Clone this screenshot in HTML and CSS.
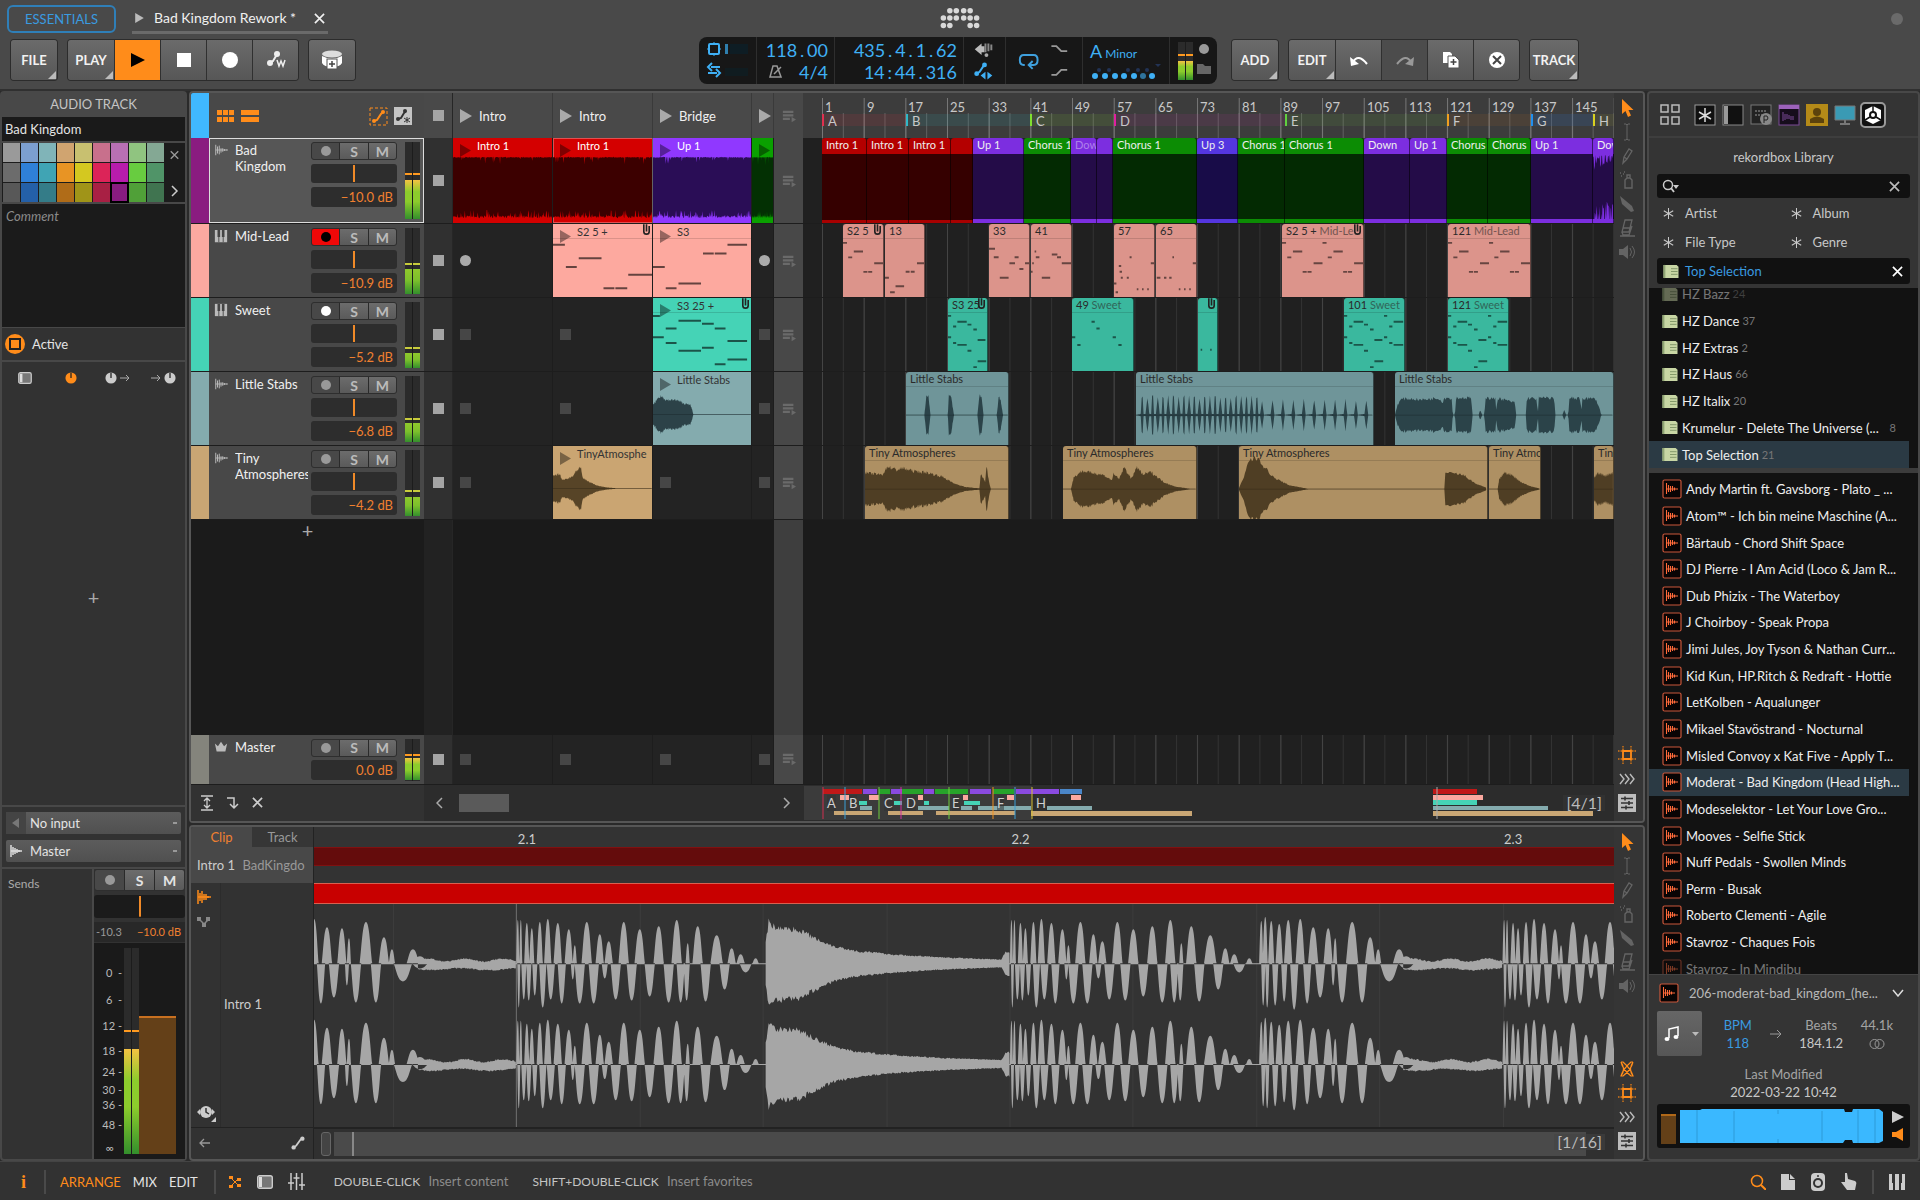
FILE: index.html
```html
<!DOCTYPE html>
<html lang="en">
<head>
<meta charset="utf-8">
<title>Bad Kingdom Rework</title>
<link rel="stylesheet" href="styles.css">
</head>
<body>
<svg class="defs" aria-hidden="true">
  <defs>
    <symbol id="i-audio" viewBox="0 0 16 16"><path d="M2 2v12M4 4v8M6 3v10M8 6v5M10 6v4M12 7v2M14 7.500v1" stroke="currentColor" stroke-width="1.100"/><path d="M2 8h14" stroke="currentColor"/></symbol>
    <symbol id="i-keys" viewBox="0 0 16 16"><path d="M1 1h14v14H1z" fill="currentColor"/><path d="M5.500 15V9M10.500 15V9" stroke="#444" /><path d="M4 1h3v8H4zM9 1h3v8H9z" fill="#444"/></symbol>
    <symbol id="i-crown" viewBox="0 0 16 16"><path d="M1 4l3.500 3L8 2l3.500 5L15 4l-2 9H3z" fill="currentColor"/></symbol>
    <symbol id="i-play" viewBox="0 0 12 14"><path d="M0 0l12 7-12 7z" fill="currentColor"/></symbol>
    <symbol id="i-x" viewBox="0 0 12 12"><path d="M1 1l10 10M11 1L1 11" stroke="currentColor" stroke-width="1.800"/></symbol>
    <symbol id="i-auto" viewBox="0 0 16 16"><path d="M3 13l3-2 5-7 2-1" stroke="currentColor" stroke-width="2" fill="none"/><circle cx="3" cy="13" r="2.500" fill="currentColor"/><circle cx="13" cy="3" r="2.500" fill="currentColor"/></symbol>
    <symbol id="i-scene" viewBox="0 0 16 16"><path d="M1 2h12v2.500H1zM1 6h12v2.500H1zM1 10h8v2.500H1zM11 9l5 3-5 3z" fill="currentColor"/></symbol>
    <symbol id="i-clip" viewBox="0 0 10 14"><path d="M2 0v8a3 3 0 0 0 6 0V2M5 0v8" stroke="#222" stroke-width="1.800" fill="none"/></symbol>
    <symbol id="i-arrow" viewBox="0 0 18 18"><path d="M4 0v15l3.500-3 2.500 6 3-1.500-2.500-5.500h5z" fill="#ff8c1a"/></symbol>
    <symbol id="i-ibeam" viewBox="0 0 18 18"><path d="M6 1h2l1 1 1-1h2M9 2v14M6 17h2l1-1 1 1h2" stroke="currentColor" fill="none"/></symbol>
    <symbol id="i-pen" viewBox="0 0 18 18"><path d="M5 16l1-6 5-8 3 2-5 8zM6 10l3 2" stroke="currentColor" stroke-width="1.300" fill="none"/></symbol>
    <symbol id="i-spray" viewBox="0 0 18 18"><path d="M7 17V9l2-2h3l2 2v8zM9 7V4h3v3M2 2h1M5 3h1M3 5h1M6 1h1" stroke="currentColor" stroke-width="1.400" fill="none"/></symbol>
    <symbol id="i-knife" viewBox="0 0 18 18"><path d="M2 1l12 10 2 5-3 1-9-8z" fill="currentColor"/></symbol>
    <symbol id="i-eraser" viewBox="0 0 18 18"><path d="M7 1h7l-3 12H4zM4 13l1 3h6l3-9M2 17h15M5 9h7" stroke="currentColor" stroke-width="1.300" fill="none"/></symbol>
    <symbol id="i-speaker" viewBox="0 0 18 18"><path d="M1 6h4l5-4v14l-5-4H1z" fill="currentColor"/><path d="M12 5q3 4 0 8M14 3q5 6 0 12" stroke="currentColor" fill="none"/></symbol>
    <symbol id="i-snap" viewBox="0 0 18 18"><path d="M5 5h8v8H5z" fill="none" stroke="#ff8c1a" stroke-width="1.800"/><path d="M5 0v4M13 0v4M5 14v4M13 14v4M0 5h4M0 13h4M14 5h4M14 13h4" stroke="#d87818" stroke-dasharray="1.500 1" stroke-width="1.400"/></symbol>
    <symbol id="i-chev" viewBox="0 0 18 18"><path d="M2 4l4 5-4 5M7 4l4 5-4 5M12 4l4 5-4 5" fill="none" stroke="#bbb" stroke-width="1.400"/></symbol>
    <symbol id="i-mix" viewBox="0 0 18 18"><path d="M0 0h18v18H0z" fill="#bdbdbd"/><path d="M3 4.500h12M3 9h12M3 13.500h12M7 2.500v4M11 7v4M8 11.500v4" stroke="#333" stroke-width="1.600"/></symbol>
    <symbol id="i-cross" viewBox="0 0 18 18"><path d="M3 2h2q8 7 10 14h-2Q5 10 3 2M15 2h-2Q5 9 3 16h2Q13 10 15 2M3 2q5 7 0 14M15 2q-5 7 0 14" fill="none" stroke="#ff8c1a" stroke-width="1.200"/></symbol>
    <symbol id="i-list" viewBox="0 0 18 16"><path d="M1 1h14l2 2v12H1z" fill="#c8d6a4"/><path d="M1 1h2v14H1z" fill="#8fa573"/><path d="M9 5h7M9 8h7M9 11h7" stroke="#7f9466"/></symbol>
    <symbol id="i-file" viewBox="0 0 20 20"><rect x="1" y="1" width="18" height="18" rx="1.500" fill="#080404" stroke="#c9563a" stroke-width="1.200"/><path d="M4.500 4v11M6.500 6v7M8.500 7v6M10.500 7v5M12.500 8.500v3" stroke="#ff6a3a" stroke-width="1.100"/><path d="M4 10h12" stroke="#ff6a3a"/></symbol>
    <symbol id="i-knob" viewBox="0 0 14 14"><circle cx="7" cy="7" r="6.500" fill="currentColor"/><path d="M7 1v6" stroke="#222" stroke-width="1.500"/></symbol>
    <symbol id="i-panel" viewBox="0 0 16 14"><rect x=".7" y=".7" width="14.600" height="12.600" rx="2" fill="#777" stroke="#ccc" stroke-width="1.400"/><path d="M2 2h3v10H2z" fill="#ddd"/></symbol>
    <symbol id="i-star" viewBox="0 0 14 14"><path d="M7 0v14M1 3.500l12 7M13 3.500l-12 7" stroke="currentColor" stroke-width="1.300"/></symbol>
    <g id="n-a"><path d="M0 4h10M13 19h10M27 13h23M51 34h10M63 34h10M78 25h22"/></g>
    <g id="n-t"><path d="M0 3h8M0 25h8M13 14h8M13 31h8M24 9h24M24 33h24M50 12h10M50 39h10M65 17h9M65 56h9M76 28h20M76 50h22"/></g>
  </defs>
</svg>

<div class="app">
  <header class="top">
    <div class="titlebar">
      <button class="essentials">ESSENTIALS</button>
      <div class="project"><svg class="s9"><use href="#i-play"/></svg><span>Bad Kingdom Rework *</span><button class="bare" aria-label="Close project"><svg class="s11"><use href="#i-x"/></svg></button></div>
      <svg class="logo" viewBox="0 0 42 26"><g fill="#d8d8d8"><circle cx="10" cy="4" r="3"/><circle cx="17" cy="4" r="3"/><circle cx="25" cy="4" r="3"/><circle cx="32" cy="4" r="3"/><circle cx="3" cy="12" r="3"/><circle cx="10" cy="12" r="3"/><circle cx="17" cy="12" r="3"/><circle cx="25" cy="12" r="3"/><circle cx="32" cy="12" r="3"/><circle cx="39" cy="12" r="3"/><circle cx="3" cy="20" r="3"/><circle cx="10" cy="20" r="3"/><circle cx="32" cy="20" r="3"/><circle cx="39" cy="20" r="3"/></g></svg>
      <i class="status-dot"></i>
    </div>
    <div class="toolbar">
      <div class="tools-left">
        <div class="group"><button class="tb menu">FILE</button></div>
        <div class="group">
          <button class="tb menu">PLAY</button>
          <button class="tb on" aria-label="Play"><svg width="16" height="16"><path d="M1 1l14 7-14 7z"/></svg></button>
          <button class="tb" aria-label="Stop"><svg width="14" height="14"><path d="M0 0h14v14H0z" fill="#fff"/></svg></button>
          <button class="tb" aria-label="Record"><svg width="16" height="16"><circle cx="8" cy="8" r="8" fill="#fff"/></svg></button>
          <button class="tb" aria-label="Automation write"><svg width="20" height="18"><path d="M3 12l4-2 3-5 1-2" stroke="#eee" stroke-width="2" fill="none"/><circle cx="4" cy="12" r="3" fill="#eee"/><circle cx="11" cy="3" r="3" fill="#eee"/><path d="M11 9l2 6 2-5 2 5 2-6" stroke="#eee" stroke-width="1.500" fill="none"/></svg></button>
        </div>
        <div class="group"><button class="tb" aria-label="Add device"><svg width="22" height="20"><ellipse cx="11" cy="4" rx="10" ry="3.500" fill="#ddd"/><path d="M1 6q10 5 20 0v7q-2 4-10 4T1 13z" fill="#fff"/><rect x="6" y="9" width="10" height="10" fill="#fff" stroke="#555"/><path d="M11 11v6M8 14h6" stroke="#444" stroke-width="1.500"/></svg></button></div>
      </div>
      <div class="display">
        <div class="d-cell d-cpu">
          <svg viewBox="0 0 48 40"><rect x="3" y="4" width="10" height="10" rx="1" fill="none" stroke="#3fb0f5" stroke-width="2"/><path d="M1 9h14M8 2v14" stroke="#3fb0f5" stroke-dasharray="2 10"/><path d="M19 4h3v10h-3z" fill="#2f7fae"/><path d="M24 4h18v10H24z" fill="#0e1d24"/><path d="M14 27H5M2 33h9M6 23l-4 4 4 4M10 29l4 4-4 4" stroke="#3fb0f5" stroke-width="2" fill="none"/><path d="M19 28h23v8H19z" fill="#101c20"/></svg>
        </div>
        <div class="d-cell d-num"><span>118<i>.</i>00</span><span><svg width="13" height="13" class="metro"><path d="M4 1h4l4 11H1zM5 9l7-7" stroke="#999" stroke-width="1.500" fill="none"/></svg><b>4/4</b></span></div>
        <div class="d-cell d-num"><span>435<i>.</i>4<i>.</i>1<i>.</i>62</span><span>14<i>:</i>44<i>.</i>316</span></div>
        <div class="d-cell"><svg viewBox="0 0 42 40"><path d="M11 9l7-6v3h3v6h-3v3z" fill="#bbb"/><path d="M22 3v9M25 3v8M28 4v6" stroke="#888" stroke-width="2"/><circle cx="23" cy="15" r="2" fill="#aaa"/><path d="M13 34l3-2 4-6" stroke="#3fb0f5" stroke-width="2" fill="none"/><circle cx="13" cy="34" r="2.500" fill="#3fb0f5"/><circle cx="21" cy="25" r="2.500" fill="#3fb0f5"/><path d="M17 36l5-4v8zM29 36l-5-4v8z" fill="#3fb0f5"/></svg></div>
        <div class="d-cell"><svg viewBox="0 0 77 40"><path d="M19 25h-1q-4 0-4-5t4-5h10q4 0 4 5t-4 5h-4M27 21l-4 4 4 4" stroke="#3fa0dd" stroke-width="2" fill="none"/><path d="M46 6h5l5 5h6M46 35h5l5-5h6" stroke="#999" stroke-width="1.800" fill="none"/></svg></div>
        <div class="d-cell d-key"><span><b>A</b> Minor</span><svg viewBox="0 0 72 18"><g fill="#3fb0f5"><circle cx="5" cy="12" r="3"/><circle cx="15" cy="12" r="3"/><circle cx="25" cy="12" r="3"/><circle cx="34" cy="12" r="3"/><circle cx="44" cy="12" r="3"/><circle cx="53" cy="12" r="3" opacity=".6"/><circle cx="62" cy="12" r="3"/></g><g fill="#235"><circle cx="9" cy="6" r="2"/><circle cx="19" cy="6" r="2"/><circle cx="38" cy="6" r="2"/><circle cx="48" cy="6" r="2"/><circle cx="57" cy="6" r="2"/><path d="M65 0h6l-3 3z"/></g></svg></div>
        <div class="d-cell d-out"><span class="meter" style="--lvl:50%;--hold:64%"><i></i><i></i></span><svg width="18" height="36"><circle cx="9" cy="7" r="5" fill="#999"/><path d="M2 22h6l2 2h6v8H2z" fill="#666"/></svg></div>
      </div>
      <div class="tools-right">
        <div class="group"><button class="tb menu">ADD</button></div>
        <div class="group">
          <button class="tb menu">EDIT</button>
          <button class="tb" aria-label="Undo"><svg width="20" height="14"><path d="M4 9q5-9 14 2" stroke="#fff" stroke-width="2" fill="none"/><path d="M1 4l1 9 8-2z" fill="#fff"/></svg></button>
          <button class="tb off" aria-label="Redo"><svg width="20" height="14"><path d="M16 9Q11 0 2 11" stroke="#999" stroke-width="2" fill="none"/><path d="M19 4l-1 9-8-2z" fill="#999"/></svg></button>
          <button class="tb" aria-label="Duplicate"><svg width="18" height="18"><path d="M1 1h7l2 2v9H1z" fill="#fff"/><path d="M6 5h7l4 4v8H6z" fill="#fff" stroke="#555"/><path d="M11.500 8v6M8.500 11h6" stroke="#444" stroke-width="1.500"/></svg></button>
          <button class="tb" aria-label="Delete"><svg width="18" height="18"><circle cx="9" cy="9" r="8" fill="#fff"/><path d="M5 5l8 8M13 5l-8 8" stroke="#444" stroke-width="2"/></svg></button>
        </div>
        <div class="group"><button class="tb menu wide">TRACK</button></div>
      </div>
    </div>
  </header>

  <main class="main">
    <aside class="inspector">
      <h2>AUDIO TRACK</h2>
      <input class="name" aria-label="Track name" value="Bad Kingdom">
      <div class="palette">
        <div class="swatches">
          <i class="p1"></i><i class="p2"></i><i class="p3"></i><i class="p4"></i><i class="p5"></i><i class="p6"></i><i class="p7"></i><i class="p8"></i><i class="p9"></i>
          <i class="q1"></i><i class="q2"></i><i class="q3"></i><i class="q4"></i><i class="q5"></i><i class="q6"></i><i class="q7"></i><i class="q8"></i><i class="q9"></i>
          <i class="r1"></i><i class="r2"></i><i class="r3"></i><i class="r4"></i><i class="r5"></i><i class="r6"></i><i class="r7 picked"></i><i class="r8"></i><i class="r9"></i>
        </div>
        <div class="pal-side"><svg class="s9"><use href="#i-x"/></svg><svg width="8" height="12"><path d="M1 1l5 5-5 5" stroke="#ccc" stroke-width="1.500" fill="none"/></svg></div>
      </div>
      <textarea class="comment" aria-label="Comment" placeholder="Comment"></textarea>
      <div class="active"><svg width="20" height="20"><circle cx="10" cy="10" r="10" fill="#ff8c1a"/><rect x="5" y="5" width="10" height="10" fill="#ff8c1a" stroke="#222" stroke-width="2"/></svg>Active</div>
      <div class="remotes">
        <svg width="14" height="12"><use href="#i-panel"/></svg>
        <svg width="12" height="12" class="orange"><use href="#i-knob"/></svg>
        <span><svg width="12" height="12"><use href="#i-knob"/></svg><svg width="10" height="8"><path d="M0 4h9M6 1l3 3-3 3" stroke="#aaa" fill="none"/></svg></span>
        <span><svg width="10" height="8"><path d="M0 4h9M6 1l3 3-3 3" stroke="#aaa" fill="none"/></svg><svg width="12" height="12"><use href="#i-knob"/></svg></span>
      </div>
      <div class="add-device"><button class="bare plus" aria-label="Add device">+</button></div>
      <div class="routing">
        <div class="route"><span class="ric"><svg width="8" height="10"><path d="M0 5l7-5v10z" fill="#777"/></svg></span><select aria-label="Input"><option>No input</option></select></div>
        <div class="route"><span class="ric lit"><svg width="12" height="12"><path d="M1 0v12M3 2v8M5 3v6M7 4v4M9 5v2M1 6h11" stroke="#ddd" stroke-width="1.500"/></svg></span><select aria-label="Output"><option>Master</option></select></div>
      </div>
      <div class="strip">
        <div class="sends">Sends</div>
        <div class="channel">
          <div class="rsm"><button class="rec" aria-label="Arm"><i></i></button><button>S</button><button>M</button></div>
          <div class="pan"></div>
          <div class="levels"><span>-10.3</span><b>−10.0 dB</b></div>
          <div class="fader">
            <div class="scale"><span style="--t:12%">0&nbsp; -</span><span style="--t:25%">6&nbsp; -</span><span style="--t:38%">12&nbsp;-</span><span style="--t:50%">18&nbsp;-</span><span style="--t:60%">24&nbsp;-</span><span style="--t:69%">30&nbsp;-</span><span style="--t:76%">36&nbsp;-</span><span style="--t:86%">48&nbsp;-</span><span style="--t:97%">∞&nbsp; &nbsp;</span></div>
            <span class="meter big" style="--lvl:51%;--hold:60%"><i></i><i></i></span>
            <div class="throw"><i></i></div>
          </div>
        </div>
      </div>
    </aside>

    <div class="center">
      <section class="panel arranger">
        <div class="rows">
          <div class="row head">
            <i class="chip blue"></i>
            <div class="th th-head">
              <svg width="18" height="12"><path d="M0 0h5v5H0zM6 0h5v5H6zM12 0h5v5h-5zM0 7h5v5H0zM6 7h5v5H6zM12 7h5v5h-5z" fill="#ff8c1a"/></svg>
              <svg width="18" height="12"><path d="M0 0h18v5H0zM0 7h18v5H0z" fill="#ff8c1a"/></svg>
              <b class="grow"></b>
              <svg width="19" height="19"><rect x="1" y="1" width="17" height="17" fill="none" stroke="#ff8c1a" stroke-dasharray="3 2"/><path d="M5 14l3-1 4-6 2-2" stroke="#ff8c1a" stroke-width="2" fill="none"/><circle cx="5" cy="14" r="2" fill="#ff8c1a"/><circle cx="14" cy="5" r="2" fill="#ff8c1a"/></svg>
              <svg width="18" height="18"><path d="M0 0h18v18H0z" fill="#c4c4c4"/><path d="M4 12l3-1 3-5 2-2" stroke="#333" stroke-width="2" fill="none"/><circle cx="4" cy="12" r="2" fill="#333"/><circle cx="11" cy="4" r="2" fill="#333"/><path d="M13 10v6M10 11l6 4M16 11l-6 4" stroke="#333"/></svg>
            </div>
            <div class="stop"><i></i></div>
            <div class="slots">
              <div class="scene"><svg class="tri"><use href="#i-play"/></svg>Intro</div><div class="scene"><svg class="tri"><use href="#i-play"/></svg>Intro</div><div class="scene"><svg class="tri"><use href="#i-play"/></svg>Bridge</div><div class="scene"><svg class="tri"><use href="#i-play"/></svg></div>
            </div>
            <div class="sc"><svg class="s14"><use href="#i-scene"/></svg></div>
            <div class="time ruler"><div class="lane">
              <i class="band ba" style="--s:0;--e:84"></i><i class="band bb" style="--s:84;--e:208"></i><i class="band bc" style="--s:208;--e:292"></i><i class="band bd" style="--s:292;--e:463"></i><i class="band be" style="--s:463;--e:625"></i><i class="band bf" style="--s:625;--e:709"></i><i class="band bg" style="--s:709;--e:771"></i><i class="band bh" style="--s:771;--e:792"></i>
              <span class="bar" style="--s:0">1</span><span class="bar" style="--s:42">9</span><span class="bar" style="--s:83">17</span><span class="bar" style="--s:125">25</span><span class="bar" style="--s:167">33</span><span class="bar" style="--s:208">41</span><span class="bar" style="--s:250">49</span><span class="bar" style="--s:292">57</span><span class="bar" style="--s:333">65</span><span class="bar" style="--s:375">73</span><span class="bar" style="--s:417">81</span><span class="bar" style="--s:458">89</span><span class="bar" style="--s:500">97</span><span class="bar" style="--s:542">105</span><span class="bar" style="--s:584">113</span><span class="bar" style="--s:625">121</span><span class="bar" style="--s:667">129</span><span class="bar" style="--s:709">137</span><span class="bar" style="--s:750">145</span>
              <span class="cue" style="--s:0">A</span><span class="cue" style="--s:84">B</span><span class="cue" style="--s:208">C</span><span class="cue" style="--s:292">D</span><span class="cue" style="--s:463">E</span><span class="cue" style="--s:625">F</span><span class="cue" style="--s:709">G</span><span class="cue" style="--s:771">H</span>
            </div></div>
          </div>

          <div class="row tall">
            <i class="chip purple"></i>
            <div class="th selected"><svg class="s14"><use href="#i-audio"/></svg><span class="tname">Bad<br>Kingdom</span>
              <div class="ctl"><div class="rsm"><button class="rec" aria-label="Arm"><i></i></button><button>S</button><button>M</button></div><div class="pan"></div><div class="db">−10.0 dB</div></div>
              <span class="meter" style="--lvl:51%;--hold:59%"><i></i><i></i></span></div>
            <div class="stop"><i></i></div>
            <div class="slots">
              <div class="slot c-red dense"><em>Intro 1</em><svg class="tri"><use href="#i-play"/></svg><svg class="body" data-wave="dense"></svg></div>
              <div class="slot c-red dense lit"><em>Intro 1</em><svg class="tri"><use href="#i-play"/></svg><svg class="body" data-wave="dense"></svg></div>
              <div class="slot c-vio dense"><em>Up 1</em><svg class="tri"><use href="#i-play"/></svg><svg class="body" data-wave="dense"></svg></div>
              <div class="slot c-grn dense"><em></em><svg class="tri"><use href="#i-play"/></svg><svg class="body" data-wave="dense"></svg></div>
            </div>
            <div class="sc"><svg class="s14"><use href="#i-scene"/></svg></div>
            <div class="time"><div class="lane">
              <div class="clip k-red" style="--s:0;--e:45">Intro 1</div><div class="clip k-red" style="--s:45;--e:87">Intro 1</div><div class="clip k-red" style="--s:87;--e:129">Intro 1</div><div class="clip k-red" style="--s:129;--e:151"></div><div class="clip k-vio" style="--s:151;--e:202">Up 1</div><div class="clip k-grn" style="--s:202;--e:249">Chorus 1</div><div class="clip k-vio faint" style="--s:249;--e:275">Dow</div><div class="clip k-vio" style="--s:275;--e:291"></div><div class="clip k-grn" style="--s:291;--e:375">Chorus 1</div><div class="clip k-ind" style="--s:375;--e:416">Up 3</div><div class="clip k-grn" style="--s:416;--e:463">Chorus 1</div><div class="clip k-grn" style="--s:463;--e:542">Chorus 1</div><div class="clip k-vio" style="--s:542;--e:588">Down</div><div class="clip k-vio" style="--s:588;--e:625">Up 1</div><div class="clip k-grn" style="--s:625;--e:666">Chorus</div><div class="clip k-grn" style="--s:666;--e:709">Chorus</div><div class="clip k-vio" style="--s:709;--e:771">Up 1</div><div class="clip k-vio" style="--s:771;--e:792">Dow<svg class="edge" data-wave="edge"></svg></div>
            </div></div>
          </div>

          <div class="row">
            <i class="chip pink"></i>
            <div class="th"><svg class="s14"><use href="#i-keys"/></svg><span class="tname">Mid-Lead</span>
              <div class="ctl"><div class="rsm"><button class="rec armed" aria-label="Arm"><i></i></button><button>S</button><button>M</button></div><div class="pan"></div><div class="db">−10.9 dB</div></div>
              <span class="meter low" style="--lvl:38%;--hold:45%"><i></i><i></i></span></div>
            <div class="stop"><i></i></div>
            <div class="slots">
              <div class="slot empty"><i class="round"></i></div>
              <div class="slot c-pink"><em>S2 5 +</em><svg class="tri"><use href="#i-play"/></svg><svg class="pin"><use href="#i-clip"/></svg><svg class="notes" viewBox="0 0 100 60" preserveAspectRatio="none"><path d="M0 6h12M13 29h11M26 20h23M51 51h11M63 51h12M76 37h24"/></svg></div>
              <div class="slot c-pink"><em>S3</em><svg class="tri"><use href="#i-play"/></svg><svg class="notes" viewBox="0 0 100 60" preserveAspectRatio="none"><path d="M0 29h12M13 51h11M26 46h23M51 15h11M63 15h12M76 6h20"/></svg></div>
              <div class="slot empty"><i class="round"></i></div>
            </div>
            <div class="sc"><svg class="s14"><use href="#i-scene"/></svg></div>
            <div class="time"><div class="lane">
              <div class="clip k-pink" style="--s:21;--e:62">S2 5<svg class="pin"><use href="#i-clip"/></svg><svg class="notes" viewBox="0 0 100 60" preserveAspectRatio="none"><use href="#n-a"/></svg></div>
              <div class="clip k-pink" style="--s:63;--e:103">13<svg class="notes" viewBox="0 0 100 60" preserveAspectRatio="none"><path d="M0 40h10M13 55h12M27 49h22M53 34h10M66 34h10M82 25h18"/></svg></div>
              <div class="clip k-pink" style="--s:167;--e:208">33<svg class="notes" viewBox="0 0 100 60" preserveAspectRatio="none"><path d="M0 10h15M12 19h12M27 40h22M51 25h14M64 19h10M76 31h10M90 25h10"/></svg></div>
              <div class="clip k-pink" style="--s:209;--e:250">41<svg class="notes" viewBox="0 0 100 60" preserveAspectRatio="none"><path d="M0 34h4M3 25h4M9 13h4M12 19h9M27 40h21M52 16h14M65 19h10M77 25h23"/></svg></div>
              <div class="clip k-pink" style="--s:292;--e:333">57<svg class="notes" viewBox="0 0 100 60" preserveAspectRatio="none"><path d="M0 46h6M4 55h6M12 28h6M14 34h6M17 40h5M32 40h5M39 19h5M57 52h4M70 52h4M83 52h4M92 25h8"/></svg></div>
              <div class="clip k-pink" style="--s:334;--e:375">65<svg class="notes" viewBox="0 0 100 60" preserveAspectRatio="none"><path d="M2 40h9M20 40h6M33 40h6M41 19h4M57 52h4M70 52h4M83 52h4M92 25h8"/></svg></div>
              <div class="clip k-pink" style="--s:460;--e:542">S2 5 + <u>Mid-Le</u><svg class="pin"><use href="#i-clip"/></svg><svg class="notes" viewBox="0 0 200 60" preserveAspectRatio="none"><use href="#n-a"/><use href="#n-a" x="100"/></svg></div>
              <div class="clip k-pink" style="--s:626;--e:709">121 <u>Mid-Lead</u><svg class="notes" viewBox="0 0 200 60" preserveAspectRatio="none"><use href="#n-a"/><use href="#n-a" x="100"/></svg></div>
            </div></div>
          </div>

          <div class="row">
            <i class="chip teal"></i>
            <div class="th"><svg class="s14"><use href="#i-keys"/></svg><span class="tname">Sweet</span>
              <div class="ctl"><div class="rsm"><button class="rec white" aria-label="Arm"><i></i></button><button>S</button><button>M</button></div><div class="pan"></div><div class="db">−5.2 dB</div></div>
              <span class="meter low" style="--lvl:23%;--hold:30%"><i></i><i></i></span></div>
            <div class="stop"><i></i></div>
            <div class="slots">
              <div class="slot empty"><i></i></div><div class="slot empty"><i></i></div>
              <div class="slot c-teal"><em>S3 25 +</em><svg class="tri"><use href="#i-play"/></svg><svg class="pin"><use href="#i-clip"/></svg><svg class="notes" viewBox="0 0 100 60" preserveAspectRatio="none"><path d="M0 3h7M0 25h11M13 16h11M13 31h11M26 8h23M26 39h23M50 11h12M50 36h12M63 16h11M63 53h11M76 29h20M76 48h20"/></svg></div>
              <div class="slot empty"><i></i></div>
            </div>
            <div class="sc"><svg class="s14"><use href="#i-scene"/></svg></div>
            <div class="time"><div class="lane">
              <div class="clip k-teal" style="--s:126;--e:166">S3 25<svg class="pin"><use href="#i-clip"/></svg><svg class="notes" viewBox="0 0 100 60" preserveAspectRatio="none"><use href="#n-t"/></svg></div>
              <div class="clip k-teal" style="--s:250;--e:312">49 <u>Sweet</u><svg class="notes" viewBox="0 0 150 60" preserveAspectRatio="none"><path d="M0 25h8M13 33h8M48 9h8M60 16h8M100 25h8M114 33h8"/></svg></div>
              <div class="clip k-teal" style="--s:376;--e:396"><svg class="pin"><use href="#i-clip"/></svg><svg class="notes" viewBox="0 0 50 60" preserveAspectRatio="none"><path d="M7 38h4M32 38h4"/></svg></div>
              <div class="clip k-teal" style="--s:522;--e:583">101 <u>Sweet</u><svg class="notes" viewBox="0 0 150 60" preserveAspectRatio="none"><use href="#n-t"/><use href="#n-t" x="100"/></svg></div>
              <div class="clip k-teal" style="--s:626;--e:687">121 <u>Sweet</u><svg class="notes" viewBox="0 0 150 60" preserveAspectRatio="none"><use href="#n-t"/><use href="#n-t" x="100"/></svg></div>
            </div></div>
          </div>

          <div class="row">
            <i class="chip steel"></i>
            <div class="th"><svg class="s14"><use href="#i-audio"/></svg><span class="tname">Little Stabs</span>
              <div class="ctl"><div class="rsm"><button class="rec" aria-label="Arm"><i></i></button><button>S</button><button>M</button></div><div class="pan"></div><div class="db">−6.8 dB</div></div>
              <span class="meter low" style="--lvl:29%;--hold:35%"><i></i><i></i></span></div>
            <div class="stop"><i></i></div>
            <div class="slots">
              <div class="slot empty"><i></i></div><div class="slot empty"><i></i></div>
              <div class="slot c-steel"><em>Little Stabs</em><svg class="tri"><use href="#i-play"/></svg><svg class="body" data-wave="env" data-env="0,20 4,30 8,38 14,30 24,30 32,22 38,20 40,10 41,0"></svg></div>
              <div class="slot empty"><i></i></div>
            </div>
            <div class="sc"><svg class="s14"><use href="#i-scene"/></svg></div>
            <div class="time"><div class="lane">
              <div class="clip k-steel" style="--s:84;--e:187">Little Stabs<svg class="notes" data-wave="env" data-env="18,0 20,40 22,40 24,0 41,0 42,40 44,40 47,0 70,0 72,40 74,40 76,0 89,0 91,40 93,30 95,0"></svg></div>
              <div class="clip k-steel" style="--s:314;--e:552">Little Stabs<svg class="notes" data-wave="pulses"></svg></div>
              <div class="clip k-steel" style="--s:573;--e:792">Little Stabs<svg class="notes" data-wave="env" data-env="0,0 1,20 3,34 8,34 12,32 20,36 22,26 22.500,36 26,36 26.500,0 27.500,0 28,36 35,36 35.500,0 38.500,0 39,12 40,0 41,0 41.500,36 46,34 46.500,6 47,36 55,26 55.500,0 60,0 60.500,36 65,34 65.500,0 66,36 73,36 73.500,0 77,0 77.500,12 78.500,0 79.500,0 80,36 85,34 85.500,6 86,36 92,34 94,12 94.500,0"></svg></div>
            </div></div>
          </div>

          <div class="row">
            <i class="chip tan"></i>
            <div class="th"><svg class="s14"><use href="#i-audio"/></svg><span class="tname">Tiny Atmospheres</span>
              <div class="ctl"><div class="rsm"><button class="rec" aria-label="Arm"><i></i></button><button>S</button><button>M</button></div><div class="pan"></div><div class="db">−4.2 dB</div></div>
              <span class="meter low" style="--lvl:29%;--hold:38%"><i></i><i></i></span></div>
            <div class="stop"><i></i></div>
            <div class="slots">
              <div class="slot empty"><i></i></div>
              <div class="slot c-tan"><em>TinyAtmosphe</em><svg class="tri"><use href="#i-play"/></svg><svg class="body" data-wave="env" data-env="0,26 7,30 9,18 18,22 28,46 30,22 36,14 44,6 54,2 65,0"></svg></div>
              <div class="slot empty"><i></i></div><div class="slot empty"><i></i></div>
            </div>
            <div class="sc"><svg class="s14"><use href="#i-scene"/></svg></div>
            <div class="time"><div class="lane">
              <div class="clip k-tan" style="--s:43;--e:187">Tiny Atmospheres<svg class="notes" data-wave="env" data-env="0,34 12,30 16,48 22,40 26,44 34,38 44,34 54,26 62,12 70,4 80,1 81,34 84,14 85,50 87,10 88,0"></svg></div>
              <div class="clip k-tan" style="--s:241;--e:375">Tiny Atmospheres<svg class="notes" data-wave="env" data-env="6,0 8,24 14,38 30,30 37,18 38,34 42,20 46,46 51,22 56,46 60,30 66,36 76,14 84,5 96,0"></svg></div>
              <div class="clip k-tan" style="--s:417;--e:666">Tiny Atmospheres<svg class="notes" data-wave="env" data-env="0,2 2,24 4,62 8,66 10,48 14,24 20,8 27,1 28,0 83,0 83.200,34 88,32 91,28 95,12 100,2"></svg></div>
              <div class="clip k-tan" style="--s:667;--e:719">Tiny Atmospheres<svg class="notes" data-wave="env" data-env="17,0 20,20 30,34 44,30 60,16 80,6 98,1"></svg></div>
              <div class="clip k-tan" style="--s:772;--e:792">Tiny<svg class="notes" data-wave="env" data-env="0,24 20,34 60,28 100,34"></svg></div>
            </div></div>
          </div>

          <div class="row filler">
            <div class="addrow"><button class="bare plus" aria-label="Add track">+</button></div>
            <div class="stop"></div><div class="slots"></div><div class="sc"></div><div class="time"></div>
          </div>

          <div class="row master">
            <i class="chip gray"></i>
            <div class="th"><svg class="s14"><use href="#i-crown"/></svg><span class="tname">Master</span>
              <div class="ctl"><div class="rsm"><button class="rec" aria-label="Arm"><i></i></button><button>S</button><button>M</button></div><div class="db">0.0 dB</div></div>
              <span class="meter" style="--lvl:53%;--hold:62%"><i></i><i></i></span></div>
            <div class="stop"><i></i></div>
            <div class="slots"><div class="slot empty"><i></i></div><div class="slot empty"><i></i></div><div class="slot empty"><i></i></div><div class="slot empty"><i></i></div></div>
            <div class="sc"><svg class="s14"><use href="#i-scene"/></svg></div>
            <div class="time"><div class="lane"></div></div>
          </div>

          <div class="row foot">
            <div class="foot-l"><svg width="14" height="16"><path d="M1 1h12M1 15h12M7 3v10M4 6l3-3 3 3M4 10l3 3 3-3" stroke="#ccc" stroke-width="1.300" fill="none"/></svg><svg width="14" height="14"><path d="M1 2h7v9M4 8l4 4 4-4" stroke="#ccc" stroke-width="1.500" fill="none"/></svg><svg class="s11"><use href="#i-x"/></svg></div>
            <div class="foot-s"><svg width="8" height="12"><path d="M6 1L1 6l5 5" stroke="#aaa" stroke-width="1.500" fill="none"/></svg><i></i><b class="grow"></b><svg width="8" height="12"><path d="M1 1l5 5-5 5" stroke="#aaa" stroke-width="1.500" fill="none"/></svg></div>
            <div class="mini">
              <svg viewBox="0 0 811 36" preserveAspectRatio="none">
                <path fill="#3b3b3b" d="M1 1h228v34H1z"/>
                <path fill="#c01818" d="M20 4h39v5H20zM630 4h44v5h-44z"/><path fill="#8a4ae0" d="M60 4h14v5H60zM88 4h11v5H88zM121 4h10v5h-10zM167 4h21v5h-21zM213 4h43v5h-43z"/><path fill="#27a32a" d="M76 4h11v5H76zM99 4h21v5H99zM132 4h33v5h-33zM190 4h21v5h-21z"/><path fill="#4a86c8" d="M257 4h22v5h-22z"/>
                <path fill="#fba9a0" d="M37 10h9v5h-9zM66 10h10v5H66zM115 10h5v5h-5zM160 10h5v5h-5zM204 10h7v5h-7zM268 10h10v5h-10zM630 10h50v5h-50z"/>
                <path fill="#45d3b6" d="M56 16h8v4h-8zM91 16h8v4h-8zM121 16h5v4h-5zM161 16h16v4h-16zM630 15h44v5h-44z"/>
                <path fill="#84abae" d="M57 21h12v4H57zM115 21h31v4h-31zM158 21h11v4h-11zM175 21h53v4h-53zM244 21h45v4h-45zM630 21h115v4H630z"/>
                <path fill="#c9a674" d="M31 26h38v4H31zM85 26h35v4H85zM133 26h79v4h-79zM228 26h161v5H228zM630 26h160v5H630z"/>
                <path stroke="#d03050" d="M20 2v32"/><path stroke="#3aa0d8" d="M42 2v32M212 2v32"/><path stroke="#6fce3c" d="M76 2v32M146 2v32"/><path stroke="#d030a0" d="M98 2v32"/><path stroke="#f09020" d="M190 2v32"/><path stroke="#d8c030" d="M229 2v32"/><path stroke="#aaa" d="M634 2v32"/>
              </svg>
              <span style="--m:24">A</span><span style="--m:46">B</span><span style="--m:81">C</span><span style="--m:103">D</span><span style="--m:149">E</span><span style="--m:194">F</span><span style="--m:233">H</span>
              <output>[4/1]</output>
            </div>
          </div>
        </div>
        <div class="toolcol">
          <svg><use href="#i-arrow"/></svg><svg><use href="#i-ibeam"/></svg><svg><use href="#i-pen"/></svg><svg><use href="#i-spray"/></svg><svg><use href="#i-knife"/></svg><svg><use href="#i-eraser"/></svg><svg><use href="#i-speaker"/></svg><b class="grow"></b><svg><use href="#i-snap"/></svg><svg><use href="#i-chev"/></svg><svg><use href="#i-mix"/></svg>
        </div>
      </section>

      <section class="panel editor">
        <div class="ed-side">
          <div class="tabs"><button class="sel">Clip</button><button>Track</button></div>
          <div class="clipname">Intro 1 <span>BadKingdo</span></div>
          <div class="ed-body">
            <div class="ed-icons"><svg width="14" height="14" class="orange"><path d="M1 0v14M3 3v8M5 1v12M7 4v6M9 4v6M11 6v2M1 7h13" stroke="currentColor" stroke-width="1.500"/></svg><svg width="14" height="12"><path d="M0 1h4v4H0zM9 1h4v4H9zM5 7h4v4H5z" fill="#888"/><path d="M3 4l4 4 4-4" stroke="#888" stroke-width="1.500" fill="none"/></svg><b class="grow"></b><svg width="20" height="18"><circle cx="9" cy="8" r="6" fill="#ccc"/><path d="M9 4v4l3 2" stroke="#333" stroke-width="1.500" fill="none"/><path d="M0 8l3-3v6zM18 8l-3-3v6zM19 18h-5l5-5z" fill="#ccc"/></svg></div>
            <div class="ed-label">Intro 1</div>
          </div>
          <div class="ed-foot"><svg width="12" height="10"><path d="M11 5H1M5 1L1 5l4 4" stroke="#999" stroke-width="1.300" fill="none"/></svg><svg class="s14"><use href="#i-auto"/></svg></div>
        </div>
        <div class="ed-main">
          <div class="ed-ruler"><span style="--x:202">2.1</span><span style="--x:696">2.2</span><span style="--x:1189">2.3</span></div>
          <div class="red-a"></div>
          <div class="red-gap"></div>
          <div class="red-b"></div>
          <svg class="edwave" viewBox="0 0 1301 222" preserveAspectRatio="none"></svg>
          <div class="ed-over"><i class="grip"></i><i class="strip-wave"></i><output>[1/16]</output></div>
        </div>
        <div class="toolcol">
          <svg><use href="#i-arrow"/></svg><svg><use href="#i-ibeam"/></svg><svg><use href="#i-pen"/></svg><svg><use href="#i-spray"/></svg><svg><use href="#i-knife"/></svg><svg><use href="#i-eraser"/></svg><svg><use href="#i-speaker"/></svg><b class="grow"></b><svg><use href="#i-cross"/></svg><svg><use href="#i-snap"/></svg><svg><use href="#i-chev"/></svg><svg><use href="#i-mix"/></svg>
        </div>
      </section>
    </div>

    <aside class="browser">
      <div class="cats">
        <svg viewBox="0 0 22 22"><path d="M2 1h7v7H2zM13 1h7v7h-7zM2 13h7v7H2zM13 13h7v7h-7z" fill="none" stroke="#bbb" stroke-width="1.500"/></svg><b class="sep"></b>
        <svg viewBox="0 0 22 22"><rect x="1" y="1" width="20" height="20" fill="#111" stroke="#999"/><path d="M11 4v14M5 8l12 7M17 8L5 15" stroke="#ddd" stroke-width="1.500"/></svg>
        <svg viewBox="0 0 22 22"><rect x="1" y="1" width="20" height="20" fill="#111" stroke="#888"/><path d="M2 2h4v18H2z" fill="#999"/></svg>
        <svg viewBox="0 0 22 22"><rect x="1" y="1" width="20" height="19" fill="#222" stroke="#777"/><path d="M5 7h12M5 11h10" stroke="#999" stroke-dasharray="2 1"/><circle cx="16" cy="15" r="6" fill="#888"/><path d="M14 19v-7h3q2 2 0 4h-3" stroke="#222" fill="none"/></svg>
        <svg viewBox="0 0 22 22"><rect x="1" y="1" width="20" height="20" fill="#160d1c" stroke="#7b4a96"/><path d="M1 1h20v4H1z" fill="#9c62ba"/><path d="M5 8v9M7 10v6M9 10v5M11 11v4M13 12v4M15 12v4" stroke="#7b4a96"/></svg>
        <svg viewBox="0 0 22 22"><path d="M0 0h22v22H0z" fill="#b48a18"/><circle cx="11" cy="8" r="4" fill="#5c420c"/><path d="M4 19v-4q7-5 14 0v4z" fill="#5c420c"/></svg>
        <svg viewBox="0 0 22 22"><path d="M1 2h20v14H1z" fill="#3a9ab4" stroke="#777"/><path d="M11 16v4M6 20h10" stroke="#777" stroke-width="2"/></svg>
        <svg viewBox="0 0 22 22" class="chosen"><path d="M11 2l8 4v10l-8 4-8-4V6z" fill="#fff"/><circle cx="11" cy="11" r="4" fill="#111"/><path d="M11 2v6M3 16l5-3M19 16l-5-3" stroke="#111" stroke-width="1.500"/><circle cx="11" cy="11" r="2" fill="#fff"/></svg>
      </div>
      <h2>rekordbox Library</h2>
      <div class="search"><svg width="17" height="14"><circle cx="6" cy="6" r="4.500" stroke="#ccc" stroke-width="1.500" fill="none"/><path d="M9 9l3 4" stroke="#ccc" stroke-width="1.800"/><path d="M11 6h6l-3 4z" fill="#ccc"/></svg><input type="search" aria-label="Search"><svg class="s11"><use href="#i-x"/></svg></div>
      <div class="filters"><a href="#"><svg class="s11"><use href="#i-star"/></svg>Artist</a><a href="#"><svg class="s11"><use href="#i-star"/></svg>Album</a><a href="#"><svg class="s11"><use href="#i-star"/></svg>File Type</a><a href="#"><svg class="s11"><use href="#i-star"/></svg>Genre</a></div>
      <div class="picked-list"><svg class="li"><use href="#i-list"/></svg><span>Top Selection</span><svg class="s11"><use href="#i-x"/></svg></div>
      <div class="lists"><ul>
        <li class="dim"><svg class="li"><use href="#i-list"/></svg>HZ Bazz <small>24</small></li>
        <li><svg class="li"><use href="#i-list"/></svg>HZ Dance <small>37</small></li>
        <li><svg class="li"><use href="#i-list"/></svg>HZ Extras <small>2</small></li>
        <li><svg class="li"><use href="#i-list"/></svg>HZ Haus <small>66</small></li>
        <li><svg class="li"><use href="#i-list"/></svg>HZ Italix <small>20</small></li>
        <li><svg class="li"><use href="#i-list"/></svg>Krumelur - Delete The Universe (... <small class="far">8</small></li>
        <li class="sel"><svg class="li"><use href="#i-list"/></svg>Top Selection <small>21</small></li>
      </ul></div>
      <div class="songs"><ul>
        <li><svg class="fi"><use href="#i-file"/></svg>Andy Martin ft. Gavsborg - Plato _ ...</li>
        <li><svg class="fi"><use href="#i-file"/></svg>Atom™ - Ich bin meine Maschine (A...</li>
        <li><svg class="fi"><use href="#i-file"/></svg>Bärtaub - Chord Shift Space</li>
        <li><svg class="fi"><use href="#i-file"/></svg>DJ Pierre - I Am Acid (Loco &amp; Jam R...</li>
        <li><svg class="fi"><use href="#i-file"/></svg>Dub Phizix - The Waterboy</li>
        <li><svg class="fi"><use href="#i-file"/></svg>J Choirboy - Speak Propa</li>
        <li><svg class="fi"><use href="#i-file"/></svg>Jimi Jules, Joy Tyson &amp; Nathan Curr...</li>
        <li><svg class="fi"><use href="#i-file"/></svg>Kid Kun, HP.Ritch &amp; Redraft - Hottie</li>
        <li><svg class="fi"><use href="#i-file"/></svg>LetKolben - Aqualunger</li>
        <li><svg class="fi"><use href="#i-file"/></svg>Mikael Stavöstrand - Nocturnal</li>
        <li><svg class="fi"><use href="#i-file"/></svg>Misled Convoy x Kat Five - Apply T...</li>
        <li class="sel"><svg class="fi"><use href="#i-file"/></svg>Moderat - Bad Kingdom (Head High...</li>
        <li><svg class="fi"><use href="#i-file"/></svg>Modeselektor - Let Your Love Gro...</li>
        <li><svg class="fi"><use href="#i-file"/></svg>Mooves - Selfie Stick</li>
        <li><svg class="fi"><use href="#i-file"/></svg>Nuff Pedals - Swollen Minds</li>
        <li><svg class="fi"><use href="#i-file"/></svg>Perm - Busak</li>
        <li><svg class="fi"><use href="#i-file"/></svg>Roberto Clementi - Agile</li>
        <li><svg class="fi"><use href="#i-file"/></svg>Stavroz - Chaques Fois</li>
        <li class="dim"><svg class="fi"><use href="#i-file"/></svg>Stavroz - In Mindibu</li>
      </ul></div>
      <div class="info">
        <div class="info-name"><svg class="fi"><use href="#i-file"/></svg><span>206-moderat-bad_kingdom_(he...</span><svg width="12" height="8"><path d="M1 1l5 6 5-6" stroke="#ddd" stroke-width="1.500" fill="none"/></svg></div>
        <div class="info-meta">
          <button class="note" aria-label="Type"><svg width="16" height="16"><path d="M5 12V3l9-2v9" stroke="#fff" stroke-width="1.500" fill="none"/><ellipse cx="3" cy="13" rx="2.500" ry="2" fill="#fff"/><ellipse cx="12" cy="11" rx="2.500" ry="2" fill="#fff"/></svg><svg width="7" height="4"><path d="M0 0h7L3.500 4z" fill="#bbb"/></svg></button>
          <div class="cyan">BPM<br>118</div>
          <svg width="12" height="10"><path d="M0 5h11M7 1l4 4-4 4" stroke="#999" fill="none"/></svg>
          <div>Beats<br><b>184.1.2</b></div>
          <div class="rate">44.1k<svg width="16" height="12"><circle cx="5.500" cy="6" r="4.500" fill="none" stroke="#999"/><circle cx="10.500" cy="6" r="4.500" fill="none" stroke="#999"/></svg></div>
        </div>
        <div class="modified">Last Modified<br><b>2022-03-22 10:42</b></div>
        <div class="preview"><i class="vol"></i><svg class="pw" viewBox="0 0 204 36" preserveAspectRatio="none"><path d="M0 2h20l2-1h142l1 3h7l1-3h26l4 3v29l-4 2h-26l-1-3h-7l-2 3H0z" fill="#3ab8ff"/><path d="M17 2v33M54 3v31M98 2v4M98 31v4M142 3v30M178 2v33M195 2v33" stroke="#2d9ad8"/></svg><div class="pbtn"><svg width="12" height="12"><path d="M0 0l12 6-12 6z" fill="#ccc"/></svg><svg width="12" height="13"><path d="M0 4h4l7-4v13L4 9H0z" fill="#ff8c1a"/></svg></div></div>
      </div>
    </aside>
  </main>

  <footer class="bottom">
    <b class="info-i">i</b><i class="vsep"></i>
    <nav><a href="#" class="orange">ARRANGE</a><a href="#">MIX</a><a href="#">EDIT</a></nav><i class="vsep second"></i>
    <div class="bicons"><svg width="13" height="14"><path d="M0 1h4v3H0zM0 10h4v3H0zM8 3h4v3H8zM8 9h4v3H8z" fill="#ff8c1a"/><path d="M3 4l6 6M3 10l6-6" stroke="#ff8c1a"/></svg><svg width="16" height="14"><use href="#i-panel"/></svg><svg width="17" height="17"><path d="M3 0v17M8.500 0v17M14 0v17M0 10h6M5.500 5h6M11 12h6" stroke="#ccc" stroke-width="1.500"/></svg></div>
    <p><b>DOUBLE-CLICK</b> Insert content</p><p><b>SHIFT+DOUBLE-CLICK</b> Insert favorites</p>
    <b class="grow"></b>
    <div class="ricons"><svg width="16" height="16"><circle cx="7" cy="7" r="5.500" stroke="#ff8c1a" stroke-width="1.500" fill="none"/><path d="M11 11l5 5" stroke="#ff8c1a" stroke-width="2"/></svg><svg width="14" height="16"><path d="M0 0h8v6h6v10H0zM9 0l5 5H9z" fill="#ccc"/></svg><svg width="16" height="18"><rect x="1" width="14" height="18" rx="4" fill="#ccc"/><circle cx="8" cy="10" r="5" fill="#333"/><circle cx="8" cy="10" r="3" fill="#ccc"/><circle cx="8" cy="3" r="1" fill="#333"/></svg><svg width="16" height="17"><path d="M4 0h2l1 6 7 2q2 1 1 4l-1 5H6L0 9h4z" fill="#ccc"/></svg><i class="vsep"></i><svg width="16" height="16"><path d="M0 0h4v16H0zM6 0h4v16H6zM12 0h4v16h-4z" fill="#ccc"/><path d="M3 0h3v9H3zM10 0h3v9h-3z" fill="#333"/></svg></div>
  </footer>
</div>
<script src="waves.js"></script>
</body>
</html>
```
FILE: styles.css
```css
* { box-sizing: border-box; }
body { margin: 0; background: #323232; color: #e4e4e4; font: 13px/16px Lato, "Open Sans", sans-serif; }
button, input, select, textarea { font: inherit; color: inherit; margin: 0; padding: 0; border: 0; background: none; border-radius: 0; }
a { color: inherit; text-decoration: none; }
ul { list-style: none; margin: 0; padding: 0; }
h2, p { margin: 0; font: inherit; }
svg { flex: none; display: block; }
i { font-style: normal; }
.defs { position: absolute; width: 0; height: 0; }
.grow { flex: 1; }
.orange { color: #ff8c1a; }
.s9 { width: 9px; height: 10px; }
.s11 { width: 11px; height: 11px; }
.s14 { width: 14px; height: 14px; }
.bare { display: inline-flex; }
.plus { font-size: 20px; line-height: 20px; color: #aaa; }

.app { min-height: 100vh; display: flex; flex-direction: column; }

/* header */
.top { background: #494949; border-bottom: 2px solid #303030; height: 91px; flex: none; }
.titlebar { display: flex; align-items: center; height: 36px; padding: 3px 14px 1px 7px; gap: 16px; position: relative; }
.essentials { width: 109px; height: 28px; border: 2px solid #2f7fb8; border-radius: 6px; color: #3a9be0; }
.project { display: flex; align-items: center; gap: 10px; padding: 1px 3px 0 3px; height: 29px; border-bottom: 3px solid #6a6a6a; color: #f0f0f0; font-size: 14px; }
.project > svg { color: #bbb; }
.project .bare { padding-left: 8px; }
.logo { position: absolute; left: 50%; top: 7px; width: 42px; height: 24px; margin-left: -21px; }
.status-dot { margin-left: auto; width: 12px; height: 12px; border-radius: 50%; background: #6a6a6a; margin-right: 3px; }
.toolbar { display: grid; grid-template-columns: 1fr 518px 1fr; padding: 0 4px 0 0; align-items: center; height: 48px; }
.tools-left, .tools-right { display: flex; gap: 11px; }
.tools-left { padding-left: 11px; }
.tools-right { padding-left: 15px; }
.group { display: flex; border-radius: 3px; box-shadow: 0 0 0 1px #2c2c2c; height: 40px; overflow: hidden; }
.tb { width: 46px; display: flex; align-items: center; justify-content: center; background: linear-gradient(#6b6b6b, #575757); font-weight: 700; position: relative; color: #f2f2f2; }
.tb + .tb { border-left: 1px solid #303030; }
.tb.wide { width: 48px; }
.tb.on { background: #ff8c1a; }
.tb.off { background: #4c4c4c; }
.tb.menu::after { content: ""; position: absolute; right: 1px; bottom: 1px; border: 4px solid; border-color: transparent #bbb #bbb transparent; }
.display { display: grid; grid-template-columns: 58px 78px 129px 42px 77px 87px 47px; background: #171717; border-radius: 8px; height: 47px; color: #3fb0f5; }
.d-cell { border-right: 1px solid #2e2e2e; padding: 3px 0; display: flex; min-width: 0; }
.d-cell:last-child { border: 0; }
.d-cell > svg { height: 40px; width: 100%; }
.d-cpu { padding-left: 5px; }
.d-num { flex-direction: column; align-items: flex-end; padding: 2px 6px 0 0; font-size: 18px; line-height: 22px; }
.d-num span { display: flex; align-items: center; }
.d-num i { width: 10px; text-align: center; }
.d-num b { font-weight: 400; }
.metro { margin-right: 17px; }
.d-key { flex-direction: column; padding: 4px 0 0 7px; }
.d-key b { font-size: 18px; font-weight: 400; }
.d-key span { line-height: 20px; font-size: 12px; }
.d-key > svg { height: 18px; width: 72px; }
.d-out { padding: 5px 6px 4px 8px; gap: 2px; }
.d-out > svg { width: 18px; height: 36px; }

/* meters */
.meter { display: flex; gap: 1px; width: 15px; flex: none; background: #1c1c1c; }
.meter i { flex: 1; background:
  linear-gradient(#ff9a20, #ff9a20) 0 calc(100% - var(--hold)) / 100% 2px no-repeat,
  linear-gradient(#f5c242, #8ccc2c 30%, #8ccc2c 55%, #338f2c) 0 100% / 100% var(--lvl) no-repeat, #2b2b2b; }
.meter.low i { background:
  linear-gradient(#c8cc3c, #c8cc3c) 0 calc(100% - var(--hold)) / 100% 2px no-repeat,
  linear-gradient(#90c82c, #7cc02c 45%, #338f2c) 0 100% / 100% var(--lvl) no-repeat, #2b2b2b; }

/* main areas */
.main { flex: 1; display: grid; grid-template-columns: 187px minmax(0, 1fr) 273px; column-gap: 2px; background: #2a2a2a; min-height: 0; }
.center { display: grid; grid-template-rows: 731fr 336fr; row-gap: 2px; min-height: 0; }
.panel { border: 2px solid #565656; border-radius: 4px; background: #323232; display: flex; overflow: hidden; min-height: 0; }
.toolcol { width: 29px; flex: none; display: flex; flex-direction: column; align-items: center; gap: 6px; padding: 6px 4px 9px 0; color: #646464; background: #353535; }
.toolcol svg { width: 18px; height: 18px; }

/* inspector */
.inspector { border: 2px solid #484848; border-radius: 4px; background: #323232; display: flex; flex-direction: column; min-height: 0; }
.inspector h2 { background: #484848; color: #c4c4c4; text-align: center; height: 24px; line-height: 22px; font-size: 13px; }
.name { height: 24px; background: #1a1a1a; padding: 0 3px; width: 100%; }
.palette { display: flex; background: #1c1c1c; border-block: 2px solid #484848; }
.swatches { display: grid; grid-template-columns: repeat(9, 1fr); grid-auto-rows: 19px; gap: 1px; width: 162px; padding-left: 1px; }
.pal-side { flex: 1; display: flex; flex-direction: column; justify-content: space-between; align-items: center; padding: 7px 0 5px; color: #999; }
.p1{background:#9a9a9a}.p2{background:#7c9fd0}.p3{background:#80b4b8}.p4{background:#d0a470}.p5{background:#c8c070}.p6{background:#c8708c}.p7{background:#b870b4}.p8{background:#90c480}.p9{background:#84a894}
.q1{background:#6c6c6c}.q2{background:#2f80d8}.q3{background:#40a4b4}.q4{background:#e89424}.q5{background:#d4c820}.q6{background:#dc2458}.q7{background:#b81cac}.q8{background:#68cc40}.q9{background:#509468}
.r1{background:#585858}.r2{background:#2460a8}.r3{background:#347c88}.r4{background:#b06c18}.r5{background:#a09418}.r6{background:#a82044}.r7{background:#881c80}.r8{background:#50a038}.r9{background:#407450}
.picked { outline: 2px solid #000; outline-offset: -1px; }
.comment { height: 124px; background: #1b1b1b; padding: 4px; resize: none; font-style: italic; border-bottom: 1px solid #484848; width: 100%; flex: none; display: block; }
.comment::placeholder { color: #8a8a8a; opacity: 1; }
.active { display: flex; align-items: center; gap: 7px; height: 34px; padding-left: 3px; border-bottom: 2px solid #484848; }
.remotes { display: grid; grid-template-columns: repeat(4, 46px); align-items: center; justify-items: center; height: 32px; color: #ccc; }
.remotes span { display: flex; align-items: center; gap: 3px; }
.add-device { flex: 1; display: flex; align-items: center; justify-content: center; padding-bottom: 6px; }
.routing { border-block: 2px solid #484848; padding: 5px 4px; display: grid; gap: 6px; }
.route { display: flex; height: 22px; background: linear-gradient(#5c5c5c, #505050); border-radius: 2px; }
.ric { width: 20px; background: #444; display: flex; align-items: center; justify-content: center; }
.ric.lit { background: none; }
.route select { flex: 1; appearance: none; padding: 0 4px; background: linear-gradient(#999, #999) right 4px center / 4px 2px no-repeat; }
.strip { display: flex; height: 290px; }
.sends { flex: 1; padding: 7px 6px; color: #aaa; font-size: 12px; border-right: 2px solid #484848; }
.channel { width: 91px; display: flex; flex-direction: column; gap: 4px; }
.rsm { display: flex; gap: 1px; height: 18px; background: #2a2a2a; border: 1px solid #2e2e2e; border-radius: 3px; overflow: hidden; }
.rsm button { flex: 1; background: linear-gradient(#6c6c6c, #5a5a5a); font-weight: 700; font-size: 14px; line-height: 15px; display: flex; align-items: center; justify-content: center; }
.rsm .rec { background: #484848; }
.rec i { width: 10px; height: 10px; border-radius: 50%; background: #999; }
.rec.white i { background: #fff; }
.rsm .rec.armed { background: #f00808; }
.rec.armed i { background: #000; }
.pan { height: 19px; border-radius: 3px; background: linear-gradient(#f08a28, #f08a28) center / 2px 90% no-repeat, #2d2d2d; }
.channel .rsm { height: 22px; }
.channel .pan { height: 23px; background-color: #1b1b1b; }
.levels { display: flex; justify-content: space-between; font-size: 11px; line-height: 20px; background: #282828; padding: 0 4px 0 2px; color: #999; height: 20px; margin-bottom: -3px; }
.levels b { color: #f08030; font-weight: 400; }
.fader { flex: 1; background: #1a1a1a; display: flex; padding: 5px 0 5px; position: relative; }
.scale { position: relative; width: 30px; font-size: 11px; line-height: 12px; color: #bbb; }
.scale span { position: absolute; right: 2px; top: var(--t); transform: translateY(-50%); white-space: nowrap; }
.throw { width: 37px; display: flex; align-items: flex-end; }
.throw i { flex: 1; height: 67%; background: #644018; border-top: 2px solid #c87020; }

/* arranger rows */
.rows { flex: 1; min-width: 0; display: flex; flex-direction: column; background: #1b1b1b; }
.row { display: flex; height: 74px; flex: none; border-bottom: 1px solid #1d1d1d; }
.row.head { height: 45px; background: #494949; border-bottom: 0; }
.row.tall { height: 86px; }
.row.filler { flex: 1; border: 0; min-height: 40px; }
.row.master { height: 50px; }
.row.foot { height: 36px; border: 0; background: #323232; }
.chip { width: 18px; flex: none; }
.blue { background: #40b8ff; } .purple { background: #8a1c80; } .pink { background: #fba9a0; } .teal { background: #45d3b6; } .steel { background: #84abae; } .tan { background: #c9a674; } .gray { background: #84847c; }
.th { width: 215px; flex: none; background: #484848; display: flex; gap: 7px; padding: 4px 4px 3px 5px; color: #bbb; }
.th.selected { background: #565656; border: 1px solid #ddd; padding: 3px 3px 3px 4px; }
.th > svg { margin-top: 1px; }
.tname { flex: 1; min-width: 0; overflow: hidden; color: #f0f0f0; margin-right: 3px; }
.th-head { align-items: center; padding: 1px 12px 0 8px; gap: 6px; }
.th-head svg { margin: 0; }
.ctl { width: 86px; display: grid; grid-template-rows: 18px 19px 20px; gap: 4px; margin-left: -7px; margin-right: 1px; align-content: start; }
.master .ctl { grid-template-rows: 18px 20px; gap: 3px; }
.db { background: #2d2d2d; border-radius: 3px; text-align: right; padding-right: 4px; line-height: 20px; color: #f08030; }
.stop { width: 29px; flex: none; background: #303030; border-right: 1px solid #262626; display: flex; align-items: center; justify-content: center; }
.head .stop { background: #494949; }
.stop i { width: 11px; height: 11px; background: #a4a4a4; }
.slots { width: 321px; flex: none; display: grid; grid-template-columns: 100px 100px 99px 22px; background: #232323; }
.scene { display: flex; align-items: center; gap: 7px; padding: 1px 0 0 7px; background: #494949; border-right: 1px solid #3a3a3a; overflow: hidden; color: #f0f0f0; }
.scene .tri { color: #aaa; width: 12px; height: 14px; }
.slot { position: relative; overflow: hidden; border-right: 1px solid #1d1d1d; font-size: 11px; line-height: 15px; }
.slot em { font-style: normal; display: block; padding-left: 24px; white-space: nowrap; color: #fff; }
.slot > .tri { position: absolute; left: 7px; top: 6px; width: 11px; height: 13px; color: #0006; z-index: 1; }
.slot.empty { display: flex; align-items: center; padding-left: 7px; }
.slot.empty i { width: 11px; height: 11px; background: #464646; flex: none; }
.slot.empty i.round { border-radius: 50%; background: #aaa; }
.slot .body, .slot .notes { position: absolute; left: 0; top: 14px; width: 100%; height: calc(100% - 14px); }
.slot .notes, .clip .notes { fill: none; stroke: #0009; stroke-width: 2; border-top: 1px solid #0002; }
.notes path { vector-effect: non-scaling-stroke; }
.dense .body { top: 17px; height: calc(100% - 20px); }
.c-red { background: #d40000; --ink: #3c0000; } .c-vio { background: #9038ff; --ink: #2a0d56; } .c-grn { background: #0aa000; --ink: #033003; }
.c-red.lit { outline: 1px solid #ffffff50; outline-offset: -1px; }
.c-pink { background: #fda99f; } .c-teal { background: #45d3b6; } .c-steel { background: #84abae; --ink: #2c4248; } .c-tan { background: #caa572; --ink: #574427; }
.c-pink em, .c-teal em, .c-steel em, .c-tan em { color: #333; }
.pin { position: absolute; right: 1px; top: 0; width: 9px; height: 13px; z-index: 1; }
.body, .notes[data-wave], .edge { overflow: visible; }
.sc { width: 29px; flex: none; background: #484848; display: flex; align-items: center; justify-content: center; color: #6a6a6a; }
.filler .stop { background: #222; } .filler .slots { background: #1a1a1a; } .filler .sc { background: #3e3e3e; }

/* timeline */
.time { flex: 1; min-width: 0; padding-left: 19px; background: #202020; overflow: hidden; }
.filler .time { background: #1b1b1b; }
.lane { position: relative; height: 100%; background: linear-gradient(90deg, #444 1px, transparent 1px) 0 0 / calc(100% / 19) 100%, linear-gradient(90deg, #323232 1px, transparent 1px) 0 0 / calc(100% / 38) 100%; }
.ruler { background: #3c3c3c; }
.ruler .lane { background: linear-gradient(90deg, #777 1px, transparent 1px) 0 100% / calc(100% / 19) 90% repeat-x, linear-gradient(90deg, #606060 1px, transparent 1px) 0 100% / calc(100% / 38) 55% repeat-x; }
.band, .bar, .cue, .clip { position: absolute; left: calc(var(--s) * 100% / 792); }
.band { top: 21px; height: 12px; width: calc((var(--e) - var(--s)) * 100% / 792); border-left: 2px solid; }
.ba { background: #c0304028; border-color: #e03050; } .bb { background: #30a0a828; border-color: #30b8c8; } .bc { background: #70b03028; border-color: #80e030; } .bd { background: #a0308828; border-color: #e020a0; } .be { background: #60a04028; border-color: #60d040; } .bf { background: #a0602828; border-color: #f0a020; } .bg { background: #3060a040; border-color: #2090f0; } .bh { background: #a0a03020; border-color: #d8d020; }
.bar, .cue { padding-left: 3px; color: #c8c8c8; }
.bar { top: 6px; } .cue { top: 20px; padding-left: 6px; }
.clip { top: 0; height: 100%; width: calc((var(--e) - var(--s)) * 100% / 792); overflow: hidden; white-space: nowrap; padding-left: 4px; font-size: 11px; line-height: 14px; border-radius: 3px 3px 0 0; border-right: 1px solid #0008; color: #eee; }
.k-red { background: linear-gradient(#b40000 16px, #350000 0, #350000 calc(100% - 3px), #a80000 0); }
.k-vio { background: linear-gradient(#7c2ee0 16px, #240c48 0, #240c48 calc(100% - 4px), #7c2ee0 0); }
.k-grn { background: linear-gradient(#0c8c04 16px, #032a02 0, #032a02 calc(100% - 4px), #0c8c04 0); }
.k-ind { background: linear-gradient(#5436e0 16px, #180c48 0, #180c48 calc(100% - 4px), #5436e0 0); }
.k-vio.faint { color: #fff6; }
.k-pink, .k-teal, .k-steel, .k-tan { color: #2a2a2a; }
.k-pink { background: #dc948b; } .k-teal { background: #3ab89e; } .k-steel { background: #6f9599; --ink: #2b4349; } .k-tan { background: #ae9063; --ink: #4f3e24; }
.clip u { text-decoration: none; opacity: .6; }
.clip .notes { position: absolute; left: 0; top: 14px; width: 100%; height: calc(100% - 14px); stroke: #0008; }
.edge { position: absolute; left: 0; top: 16px; width: 100%; height: calc(100% - 16px); --ink: #7c2ee0; }

.foot-l { width: 233px; display: flex; align-items: center; gap: 12px; padding-left: 9px; color: #ccc; background: #323232; }
.foot-s { width: 379px; display: flex; align-items: center; gap: 15px; padding: 0 12px 0 12px; background: #2c2c2c; }
.foot-s i { width: 50px; height: 18px; background: #5a5a5a; }
.addrow { width: 233px; flex: none; text-align: center; }
.mini { flex: 1; min-width: 0; position: relative; background: #2c2c2c; }
.mini svg { width: 100%; height: 100%; }
.mini span { position: absolute; top: 10px; left: calc(var(--m) * 100% / 811); color: #d0d0d0; background: #3338; }
.mini output, .ed-over output { position: absolute; right: 9px; top: 10px; color: #bbb; font-size: 16px; }
.mini output { padding: 0 3px; background: #333c; }

/* editor */
.ed-side { width: 123px; flex: none; display: flex; flex-direction: column; border-right: 1px solid #222; }
.tabs { display: flex; height: 20px; }
.tabs button { flex: 1; color: #999; background: #363636; line-height: 18px; }
.tabs .sel { background: #484848; color: #f08030; }
.clipname { background: #484848; height: 36px; line-height: 36px; padding-left: 6px; color: #ccc; white-space: nowrap; overflow: hidden; flex: none; }
.clipname span { color: #999; margin-left: 4px; }
.ed-body { flex: 1; display: flex; min-height: 0; }
.ed-icons { width: 30px; padding: 7px 0 5px 6px; display: flex; flex-direction: column; gap: 12px; border-right: 1px solid #2c2c2c; }
.ed-label { align-self: center; padding: 0 0 1px 3px; color: #ccc; }
.ed-foot { height: 32px; border-top: 1px solid #222; display: flex; align-items: center; justify-content: space-between; padding: 0 8px 2px 8px; color: #ccc; }
.ed-main { flex: 1; min-width: 0; display: flex; flex-direction: column; }
.ed-ruler { height: 20px; position: relative; background: #333; flex: none; }
.ed-ruler span { position: absolute; left: calc(var(--x) * 100% / 1301); top: 4px; padding-left: 2px; color: #ccc; }
.red-a { height: 19px; background: #640c0c; border-block: 1px solid #801010; flex: none; }
.red-gap { height: 17px; background: #333; flex: none; }
.red-b { height: 21px; background: #c80000; border-block: 1px solid #d86050; flex: none; }
.edwave { flex: 1; min-height: 0; width: 100%; background: #333; }
.ed-over { height: 32px; border-top: 2px solid #222; position: relative; display: flex; gap: 3px; padding: 3px 28px 3px 7px; background: #303030; flex: none; }
.grip { width: 10px; border: 1px solid #666; border-radius: 3px; background: #444; }
.strip-wave { flex: 1; background: linear-gradient(90deg, transparent 18px, #888 18px, #888 20px, transparent 20px), #4a4a4a; }
.ed-over output { top: 5px; padding: 0 3px; background: #4448; }

/* browser */
.browser { border: 2px solid #484848; border-radius: 4px; background: #343434; display: flex; flex-direction: column; min-height: 0; }
.cats { display: flex; align-items: center; gap: 6px; height: 45px; padding: 0 10px; border-bottom: 2px solid #3e3e3e; flex: none; }
.cats svg { width: 22px; height: 22px; }
.cats .sep { width: 1px; }
.cats .chosen { outline: 2px solid #999; border-radius: 3px; background: #111; }
.browser h2 { text-align: center; color: #c8c8c8; padding: 11px 0 9px; }
.search { display: flex; align-items: center; height: 24px; margin: 0 8px; padding: 0 10px 0 5px; background: #111; border-radius: 3px; color: #bbb; flex: none; }
.search input { flex: 1; min-width: 0; }
.filters { display: grid; grid-template-columns: 1fr 1fr; row-gap: 13px; padding: 7px 0 8px 14px; color: #c8c8c8; }
.filters a { display: flex; align-items: center; gap: 11px; }
.picked-list { display: flex; align-items: center; gap: 5px; height: 26px; margin: 0 8px 4px; padding: 0 7px 0 5px; background: #111; border-radius: 3px; color: #3a9be0; flex: none; }
.picked-list span { flex: 1; }
.picked-list svg:last-child { color: #fff; }
.li { width: 18px; height: 15px; }
.fi { width: 20px; height: 20px; }
.lists { height: 180px; overflow: hidden; background: #121212; display: flex; align-items: flex-end; flex: none; }
.lists ul { width: 100%; display: grid; grid-template-rows: repeat(7, 1fr); height: 187px; flex: none; padding: 0 9px 0 0; }
.lists li, .songs li { display: flex; align-items: center; white-space: nowrap; overflow: hidden; color: #eee; }
.lists li { gap: 3px; padding-left: 12px; }
.lists small { font-size: 11px; color: #777; }
.lists .far { margin-left: auto; padding-right: 13px; }
.sel { background: #2b3a44; }
.dim { opacity: .45; }
.songs { flex: 1; min-height: 0; overflow: hidden; background: #121212; border-top: 5px solid #3c3c3c; position: relative; }
.songs ul { position: absolute; inset: 3px 9px auto 0; display: grid; grid-template-rows: repeat(19, 1fr); height: 506px; }
.songs li { gap: 4px; padding-left: 13px; }
.info { height: 185px; flex: none; color: #a4a4a4; border-top: 1px solid #444; }
.info b { font-weight: 400; color: #c8c8c8; }
.info-name { display: flex; align-items: center; gap: 10px; padding: 8px 14px 8px 10px; color: #b8b8b8; }
.info-name span { flex: 1; white-space: nowrap; }
.info-meta { display: flex; align-items: center; justify-content: space-between; padding: 0 25px 0 8px; text-align: center; line-height: 18px; }
.note { width: 45px; height: 45px; background: linear-gradient(#666, #565656); border-radius: 2px; display: flex; align-items: center; justify-content: space-between; padding: 0 3px 0 7px; margin-right: 4px; }
.cyan { color: #3a9be0; }
.rate svg { margin: 4px auto 2px; }
.modified { text-align: center; line-height: 18px; padding: 9px 0 3px; }
.preview { display: flex; gap: 4px; height: 44px; margin: 0 8px; padding: 4px 6px 4px 4px; background: #111; border-radius: 3px; }
.vol { width: 15px; margin-top: 6px; background: #644018; border-top: 2px solid #b06818; }
.pw { flex: 1; min-width: 0; height: 36px; }
.pbtn { display: flex; flex-direction: column; justify-content: space-around; padding-left: 4px; }

/* footer */
.bottom { height: 39px; flex: none; display: flex; align-items: center; padding: 1px 15px 0 21px; background: #323232; border-top: 1px solid #444; }
.info-i { color: #ff8c1a; font: 700 18px/20px "Liberation Serif", serif; }
.vsep { width: 2px; height: 24px; background: #4a4a4a; margin: 0 14px 0 18px; }
.vsep.second { margin: 0 13px 0 16px; }
.bottom nav { display: flex; gap: 12px; }
.bicons { display: flex; align-items: center; gap: 15px; margin-right: 29px; }
.bottom p { color: #8c8c8c; margin-right: 24px; white-space: nowrap; }
.bottom p b { color: #c4c4c4; font-weight: 400; font-size: 12px; margin-right: 5px; }
.ricons { display: flex; align-items: center; gap: 15px; }
.ricons .vsep { margin: 0; }
```
FILE: waves.js
```js
// Draws clip and editor waveforms as SVG paths.
(function () {
  var NS = 'http://www.w3.org/2000/svg';
  var seed = 7;
  function rnd() { seed = (seed * 16807) % 2147483647; return seed / 2147483647; }
  function add(svg, d, fill) {
    var p = document.createElementNS(NS, 'path');
    p.setAttribute('d', d);
    p.style.fill = fill;
    p.style.stroke = 'none';
    svg.appendChild(p);
  }
  function level(pts, x) {
    for (var i = 1; i < pts.length; i++) {
      if (x <= pts[i][0] && x >= pts[i - 1][0]) {
        var a = pts[i - 1], b = pts[i];
        return a[1] + (b[1] - a[1]) * (x - a[0]) / ((b[0] - a[0]) || 1);
      }
    }
    return 0;
  }
  function envelope(svg, pts) {
    svg.setAttribute('viewBox', '0 0 100 100');
    svg.setAttribute('preserveAspectRatio', 'none');
    var up = 'M0 48', down = '';
    for (var x = 0; x <= 100; x += 0.4) {
      var h = level(pts, x) * (0.85 + rnd() * 0.2);
      up += 'L' + x.toFixed(1) + ' ' + (48 - h * 0.85);
      down = 'L' + x.toFixed(1) + ' ' + (48.6 + h * 0.85) + down;
    }
    add(svg, up + down + 'Z', 'var(--ink)');
    add(svg, 'M0 48h100v1H0z', 'rgba(0,0,0,.25)');
  }
  document.querySelectorAll('[data-wave]').forEach(function (svg) {
    var kind = svg.dataset.wave, pts, x;
    if (kind === 'env') {
      pts = svg.dataset.env.split(' ').map(function (s) { return s.split(',').map(Number); });
      envelope(svg, pts);
    } else if (kind === 'pulses') {
      pts = [[0, 0]];
      for (x = 2; x < 98; x += x < 52 ? 2.2 : 4.4) {
        var h = x < 52 ? 38 : 32;
        pts.push([x, 2], [x + 0.4, h], [x + 0.8, h], [x + 1.2, x < 52 ? 2 : 0]);
      }
      envelope(svg, pts);
    } else {
      svg.setAttribute('viewBox', '0 0 100 70');
      svg.setAttribute('preserveAspectRatio', 'none');
      var edge = kind === 'edge', step = edge ? 3 : 0.5;
      var top = 'M0 ' + (edge ? 0 : 3), bot = '';
      for (x = 0; x <= 100; x += step) {
        var t = edge ? (rnd() * 18 * (1 - x / 160)) : (2 + (rnd() > 0.93 ? rnd() * 9 : rnd()));
        var b = edge ? 70 - rnd() * 22 : 68 - (rnd() > 0.8 ? rnd() * 9 : rnd() * 3);
        top += 'L' + x + ' ' + t.toFixed(1);
        bot = 'L' + x + ' ' + b.toFixed(1) + bot;
      }
      if (edge) add(svg, top + 'L100 0Z' + 'M100 70' + bot + 'L0 70Z', 'var(--ink)');
      else add(svg, top + bot + 'Z', 'var(--ink)');
    }
  });

  // Editor view: two channels with the same drum pattern.
  var ed = document.querySelector('.edwave');
  var grid = '';
  for (var g = 0; g < 10; g++) grid += 'M' + Math.round(79 + g * 123.4) + ' 0h1v222h-1z';
  add(ed, grid, '#3d3d3d');
  add(ed, 'M202 0h1v222h-1z', '#707070');
  var rollUp = [[2,1.5,43],[5,1.5,43],[11,2.5,40],[16,2.5,35],[24,3,41],[32,3.5,44],[42,4,40],[53,4,34],[59,2,18],[71,5,41],[84,4,29],[93,4,22],[108,5,41],[124,5,34],[143,5,37],[161,5,43],[172,2,20],[182,5,37],[201,6,28],[216,4,15],[225,4,9],[240,3,5]];
  var rollDown = [[3,1.5,44],[8,2.5,36],[13,2.5,37],[19,2.5,32],[27,3.5,44],[35,4,36],[46,4,40],[57,2,16],[64,5,40],[78,5,40],[89,3,15],[100,5,36],[116,5,37],[134,5,33],[153,5,39],[165,4,39],[171,3,37],[190,5,38],[209,5,26],[230,6,9]];
  var hitUp = [[3,2,42],[7,2.5,46],[13,3,42],[21,3.5,39],[30,4,43],[42,4.5,44],[55,5,36],[70,4.5,35],[77,2,25],[94,6,41],[112,5,26],[120,3,14],[141,6,14],[148,7,7]];
  var hitDown = [[5,2,42],[9,2,44],[17,3,42],[26,3,38],[36,4,46],[49,4,40],[62,5,34],[75,2,22],[84,5,39],[104,5,39],[131,9,18],[148,8,5]];
  function pulse(p, ox, base, dir) {
    var x = ox + p[0], w = p[1] * 1.05, h = p[2] * dir;
    return 'M' + (x - w) + ' ' + base + 'C' + (x - w * 0.7) + ' ' + (base + h * 0.35) + ' ' + (x - w * 0.55) + ' ' + (base + h) + ' ' + x + ' ' + (base + h) +
      'C' + (x + w * 0.55) + ' ' + (base + h) + ' ' + (x + w * 0.7) + ' ' + (base + h * 0.35) + ' ' + (x + w) + ' ' + base + 'Z';
  }
  function band(x0, x1, base, fn) {
    var up = 'M' + x0 + ' ' + base, down = '';
    for (var x = x0; x <= x1; x++) {
      var a = fn(x - x0);
      up += 'L' + x + ' ' + (base - a[0]).toFixed(1);
      down = 'L' + x + ' ' + (base + a[1]).toFixed(1) + down;
    }
    return up + down + 'Z';
  }
  function hiss(t) { return [2.5 + 1.5 * Math.sin(t / 6) + rnd() * 1.5, 5 + Math.sin(t / 9) + rnd() * 1.5]; }
  var kick = [[0, 22], [3, 43], [10, 37], [34, 35], [50, 26], [68, 18], [90, 13], [130, 9], [180, 6], [236, 4], [240, 12], [244, 12]];
  function kickFn(t) { var h = level(kick, t); return [h * (0.86 + rnd() * 0.18), h * (0.9 + rnd() * 0.18)]; }
  [59, 159].forEach(function (base) {
    var d = 'M0 ' + base + 'h1301v1H0z';
    [202, 696, 1189].forEach(function (ox) {
      rollUp.forEach(function (p) { d += pulse(p, ox, base, -1); });
      rollDown.forEach(function (p) { d += pulse(p, ox, base, 1); });
    });
    [-42, 945].forEach(function (ox) {
      hitUp.forEach(function (p) { d += pulse(p, ox, base, -1); });
      hitDown.forEach(function (p) { d += pulse(p, ox, base, 1); });
    });
    d += band(104, 202, base, hiss) + band(1090, 1189, base, hiss) + band(452, 696, base, kickFn);
    add(ed, d, '#a6a6a6');
  });
})();
```
